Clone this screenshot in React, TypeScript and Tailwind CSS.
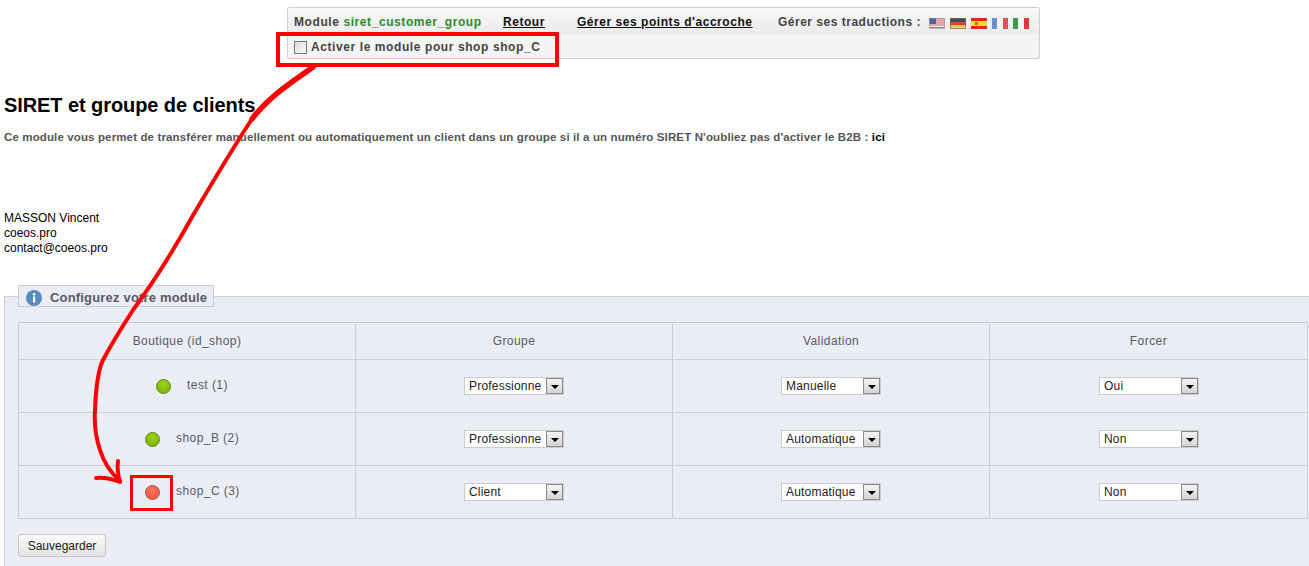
const arrow =
  "M313 67 C292 82 268 97 252 119 C238 140 215 178 192 217 C172 253 150 287 133 310 C122 327 111 345 103 360 C98 370 96 385 95 410 C94 425 96 438 100 450 C103 460 110 472 120 481";

function Flag({ name }: { name: string }) {
  if (name === "us") {
    return (
      <svg width="16" height="11" viewBox="0 0 16 11" className="block">
        <rect width="16" height="11" fill="#f3eeee" />
        <path d="M0 1h16M0 3h16M0 5h16M0 7h16M0 9.500h16" stroke="#d0606a" strokeWidth="1" />
        <rect width="7" height="6" fill="#4a5fa8" />
        <rect x=".5" y=".5" width="15" height="10" stroke="#9a8f9a" strokeOpacity=".6" fill="none" />
      </svg>
    );
  }
  if (name === "de") {
    return (
      <svg width="16" height="11" viewBox="0 0 16 11" className="block">
        <rect width="16" height="4" fill="#4a4a4a" />
        <rect y="4" width="16" height="3.500" fill="#d8443a" />
        <rect y="7.500" width="16" height="3.500" fill="#f2cf58" />
        <rect x=".5" y=".5" width="15" height="10" stroke="#77705a" strokeOpacity=".7" fill="none" />
      </svg>
    );
  }
  if (name === "es") {
    return (
      <svg width="16" height="11" viewBox="0 0 16 11" className="block">
        <rect width="16" height="11" fill="#e02a20" />
        <rect y="3" width="16" height="5" fill="#f8d830" />
        <rect x="4" y="4" width="3" height="3" fill="#c8682a" />
      </svg>
    );
  }
  if (name === "fr") {
    return (
      <svg width="16" height="11" viewBox="0 0 16 11" className="block">
        <rect width="6" height="11" fill="#6f8fd0" />
        <rect x="5" width="6" height="11" fill="#f4f4f8" />
        <rect x="11" width="5" height="11" fill="#e0505a" />
      </svg>
    );
  }
  return (
    <svg width="16" height="11" viewBox="0 0 16 11" className="block">
      <rect width="6" height="11" fill="#3f9a4a" />
      <rect x="5" width="6" height="11" fill="#f6f6f2" />
      <rect x="11" width="5" height="11" fill="#e0383a" />
    </svg>
  );
}

function Dot({ color }: { color: "green" | "red" }) {
  return (
    <span
      className={`block h-[15px] w-[15px] rounded-full border ${
        color === "green"
          ? "border-[#5f8f10] bg-[radial-gradient(circle_at_50%_35%,#9ed01c,#74ad08)]"
          : "border-[#a85a50] bg-[radial-gradient(circle_at_50%_35%,#ff7560,#ea4c3a)]"
      }`}
    />
  );
}

function Select({ value }: { value: string }) {
  return (
    <div className="flex h-[18px] w-[100px] items-center justify-between border border-[#c9ccd2] bg-white pl-1 text-[12px] text-[#222]">
      <span className="overflow-hidden whitespace-nowrap tracking-[0.2px]">{value}</span>
      <span className="flex h-4 w-[17px] shrink-0 items-center justify-center border border-[#8a8a8a] bg-[linear-gradient(#f4f4f4,#d4d4d4)]">
        <span className="mt-[2px] block h-0 w-0 border-x-[4px] border-t-[4px] border-x-transparent border-t-black" />
      </span>
    </div>
  );
}

const rows = [
  { name: "test (1)", color: "green" as const, shift: "pl-[137px]", group: "Professionne", val: "Manuelle", force: "Oui" },
  { name: "shop_B (2)", color: "green" as const, shift: "pl-[126px]", group: "Professionne", val: "Automatique", force: "Non" },
  { name: "shop_C (3)", color: "red" as const, shift: "pl-[126px]", group: "Client", val: "Automatique", force: "Non" },
];

export default function App() {
  return (
    <div className="relative h-[566px] w-[1309px] overflow-hidden bg-white font-['Liberation_Sans',Arial,sans-serif] text-[12px] text-[#222]">
      <div className="pt-[7px]">
        <div className="ml-[287px] h-[52px] w-[753px] rounded-[2px] border border-[#cfcfcf] bg-[#f4f4f4] text-[12px] font-bold text-[#444]">
          <div className="flex h-[26px] items-center bg-[linear-gradient(#f8f8f8,#ebebeb)] pt-[2px] pl-[6px] tracking-[0.54px]">
            <span className="w-[209px] whitespace-nowrap tracking-[0.58px]">
              Module <span className="text-[#2f8a2f]">siret_customer_group</span>
            </span>
            <span className="w-[74px] text-[#111] underline">Retour</span>
            <span className="w-[201px] whitespace-nowrap text-[#111] underline">Gérer ses points d'accroche</span>
            <span className="w-[151px] whitespace-nowrap tracking-[0.5px]">Gérer ses traductions :</span>
            <div className="mt-[2px] flex gap-[5px]">
              {["us", "de", "es", "fr", "it"].map((f) => (
                <Flag key={f} name={f} />
              ))}
            </div>
          </div>
          <div className="flex h-6 items-center gap-[4px] pt-[2px] pl-[6px] tracking-[0.59px]">
            <span className="block h-[13px] w-[13px] border border-[#777] bg-[linear-gradient(135deg,#dcdcdc,#fafafa)]" />
            <span>Activer le module pour shop shop_C</span>
          </div>
        </div>
      </div>

      <div className="pl-1">
        <h2 className="mt-[34px] text-[20px] leading-[24px] font-bold tracking-[-0.08px] text-black">SIRET et groupe de clients</h2>
        <p className="mt-[13px] text-[11.500px] leading-[14px] font-bold tracking-[0.13px] whitespace-nowrap text-[#555]">
          Ce module vous permet de transférer manuellement ou automatiquement un client dans un groupe si il a un numéro SIRET N'oubliez pas d'activer le B2B : <span className="text-black">ici</span>
        </p>
        <div className="mt-[67px] text-[12px] leading-[15px] text-black">
          <div>MASSON Vincent</div>
          <div>coeos.pro</div>
          <div>contact@coeos.pro</div>
        </div>

        <fieldset className="mt-[29px] w-[1330px] border border-[#ccced7] bg-[#ebedf4] pr-[20px] pb-4 pl-[13px]">
          <legend className="flex h-[22px] w-[196px] items-center gap-[8px] border border-[#ccced7] bg-[#ebedf4] pt-[3px] pl-[7px] text-[13px] font-bold tracking-[0.18px] text-[#585a69]">
            <svg width="16" height="16" viewBox="0 0 16 16" className="shrink-0">
              <circle cx="8" cy="8" r="8" fill="#5a8dbe" />
              <rect x="7" y="6.500" width="2.200" height="6" fill="#fff" />
              <circle cx="8.100" cy="4.300" r="1.300" fill="#fff" />
            </svg>
            Configurez votre module
          </legend>
          <table className="mt-[15px] w-[1289px] table-fixed border-collapse text-[12px] tracking-[0.44px] text-[#585a69]">
            <thead>
              <tr className="h-[37px]">
                <th className="w-[337px] border border-[#ccced7] font-normal">Boutique (id_shop)</th>
                <th className="w-[317px] border border-[#ccced7] font-normal">Groupe</th>
                <th className="w-[317px] border border-[#ccced7] font-normal">Validation</th>
                <th className="w-[318px] border border-[#ccced7] font-normal">Forcer</th>
              </tr>
            </thead>
            <tbody>
              {rows.map((r) => (
                <tr key={r.name} className="h-[53px]">
                  <td className="border border-[#ccced7]">
                    <div className={`flex items-center gap-4 ${r.shift}`}>
                      <Dot color={r.color} />
                      <span className="-mt-[2px]">{r.name}</span>
                    </div>
                  </td>
                  <td className="border border-[#ccced7] pl-[108px]">
                    <Select value={r.group} />
                  </td>
                  <td className="border border-[#ccced7] pl-[108px]">
                    <Select value={r.val} />
                  </td>
                  <td className="border border-[#ccced7] pl-[109px]">
                    <Select value={r.force} />
                  </td>
                </tr>
              ))}
            </tbody>
          </table>
          <button className="mt-[15px] h-[23px] w-[88px] rounded-[3px] border border-[#c6c6c6] bg-[linear-gradient(#fafafa,#e4e4e4)] text-[12px] text-[#222]">
            Sauvegarder
          </button>
        </fieldset>
      </div>

      {/* annotations drawn on top of the screenshot */}
      <div className="absolute top-[32px] left-[276px] h-[35px] w-[283px] border-4 border-[#f00]" />
      <div className="absolute top-[475px] left-[130px] h-[36px] w-[43px] border-[3px] border-[#f00]" />
      <svg className="pointer-events-none absolute top-0 left-0" width="1309" height="566" viewBox="0 0 1309 566" fill="none">
        <path d={arrow} stroke="#f00" strokeWidth="4" strokeLinecap="round" />
        <path d="M313 67 C292 82 268 97 252 119" stroke="#f00" strokeWidth="5.500" strokeLinecap="round" />
        <path d="M96 478 C104 477 112 479 120 482 C118 475 117 468 118 461" stroke="#f00" strokeWidth="4" strokeLinecap="round" strokeLinejoin="round" />
      </svg>
    </div>
  );
}
